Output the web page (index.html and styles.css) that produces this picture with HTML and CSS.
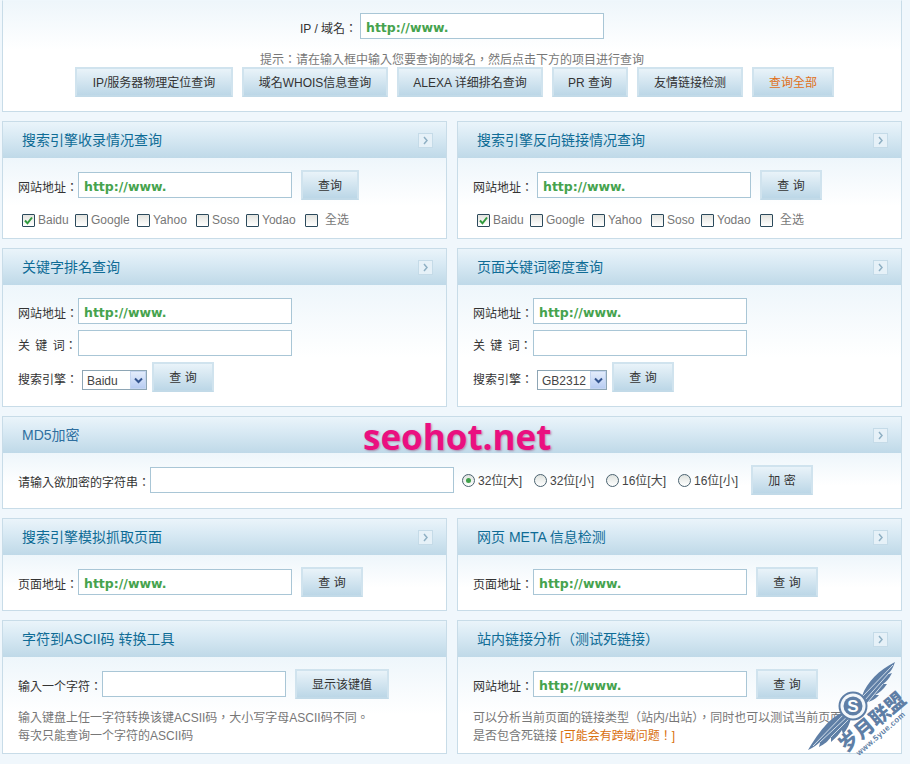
FILE: index.html
```html
<!DOCTYPE html>
<html>
<head>
<meta charset="utf-8">
<title>站长工具</title>
<link rel="stylesheet" href="styles.css">
</head>
<body>
<div class="page">
  <section class="panel top">
    <div class="top-line"><label class="lbl w60">IP / 域名：</label><input class="field url wide" value="http://www."></div>
    <p class="hint">提示：请在输入框中输入您要查询的域名，然后点击下方的项目进行查询</p>
    <div class="top-btns">
      <button class="btn b158">IP/服务器物理定位查询</button>
      <button class="btn b146">域名WHOIS信息查询</button>
      <button class="btn b146">ALEXA 详细排名查询</button>
      <button class="btn b76">PR 查询</button>
      <button class="btn b106">友情链接检测</button>
      <button class="btn b82 orange">查询全部</button>
    </div>
  </section>

  <div class="row">
    <section class="panel">
      <header class="head"><h2>搜索引擎收录情况查询</h2><span class="more"><svg width="7" height="9" viewBox="0 0 7 9"><path d="M2 1l3 3.5L2 8" fill="none" stroke="#8fb0c4" stroke-width="1.5"/></svg></span></header>
      <div class="body pad-check">
        <div class="line"><label class="lbl w60">网站地址：</label><input class="field url f214" value="http://www."><button class="btn b58">查询</button></div>
        <div class="checks">
          <span class="opt o53"><i class="box"><svg width="11" height="11" viewBox="0 0 11 11"><path d="M2 5.5l2.5 2.8L9 2.5" fill="none" stroke="#2f9a3c" stroke-width="2"/></svg></i>Baidu</span>
          <span class="opt o62"><i class="box"></i>Google</span>
          <span class="opt o59"><i class="box"></i>Yahoo</span>
          <span class="opt o50"><i class="box"></i>Soso</span>
          <span class="opt o59"><i class="box"></i>Yodao</span>
          <span class="opt all"><i class="box"></i>全选</span>
        </div>
      </div>
    </section>
    <section class="panel">
      <header class="head"><h2>搜索引擎反向链接情况查询</h2><span class="more"><svg width="7" height="9" viewBox="0 0 7 9"><path d="M2 1l3 3.5L2 8" fill="none" stroke="#8fb0c4" stroke-width="1.5"/></svg></span></header>
      <div class="body pad-check">
        <div class="line"><label class="lbl w64">网站地址：</label><input class="field url f214" value="http://www."><button class="btn b62">查 询</button></div>
        <div class="checks">
          <span class="opt o53"><i class="box"><svg width="11" height="11" viewBox="0 0 11 11"><path d="M2 5.5l2.5 2.8L9 2.5" fill="none" stroke="#2f9a3c" stroke-width="2"/></svg></i>Baidu</span>
          <span class="opt o62"><i class="box"></i>Google</span>
          <span class="opt o59"><i class="box"></i>Yahoo</span>
          <span class="opt o50"><i class="box"></i>Soso</span>
          <span class="opt o59"><i class="box"></i>Yodao</span>
          <span class="opt all"><i class="box"></i>全选</span>
        </div>
      </div>
    </section>
  </div>

  <div class="row">
    <section class="panel">
      <header class="head"><h2>关键字排名查询</h2><span class="more"><svg width="7" height="9" viewBox="0 0 7 9"><path d="M2 1l3 3.5L2 8" fill="none" stroke="#8fb0c4" stroke-width="1.5"/></svg></span></header>
      <div class="body pad-form">
        <div class="line tight"><label class="lbl w60">网站地址：</label><input class="field url f214" value="http://www."></div>
        <div class="line tight"><label class="lbl w60 spaced">关 键 词：</label><input class="field f214"></div>
        <div class="line pick"><label class="lbl w64">搜索引擎：</label><span class="select s65">Baidu<i class="arrow"><svg width="9" height="7" viewBox="0 0 9 7"><path d="M1 1.5l3.5 3.5L8 1.5" fill="none" stroke="#34558f" stroke-width="2"/></svg></i></span><button class="btn b62 near">查 询</button></div>
      </div>
    </section>
    <section class="panel">
      <header class="head"><h2>页面关键词密度查询</h2><span class="more"><svg width="7" height="9" viewBox="0 0 7 9"><path d="M2 1l3 3.5L2 8" fill="none" stroke="#8fb0c4" stroke-width="1.5"/></svg></span></header>
      <div class="body pad-form">
        <div class="line tight"><label class="lbl w60">网站地址：</label><input class="field url f214" value="http://www."></div>
        <div class="line tight"><label class="lbl w60 spaced">关 键 词：</label><input class="field f214"></div>
        <div class="line pick"><label class="lbl w64">搜索引擎：</label><span class="select s70">GB2312<i class="arrow"><svg width="9" height="7" viewBox="0 0 9 7"><path d="M1 1.5l3.5 3.5L8 1.5" fill="none" stroke="#34558f" stroke-width="2"/></svg></i></span><button class="btn b62 near">查 询</button></div>
      </div>
    </section>
  </div>

  <section class="panel solo">
    <header class="head"><h2 class="md5">MD5加密</h2><span class="more"><svg width="7" height="9" viewBox="0 0 7 9"><path d="M2 1l3 3.5L2 8" fill="none" stroke="#8fb0c4" stroke-width="1.5"/></svg></span></header>
    <div class="body pad-one">
      <div class="line">
        <label class="lbl w132">请输入欲加密的字符串：</label><input class="field f304">
        <span class="radio r72 first"><i class="dot on"></i>32位[大]</span>
        <span class="radio r72"><i class="dot"></i>32位[小]</span>
        <span class="radio r72"><i class="dot"></i>16位[大]</span>
        <span class="radio r64"><i class="dot"></i>16位[小]</span>
        <button class="btn b62">加 密</button>
      </div>
    </div>
  </section>

  <div class="row">
    <section class="panel">
      <header class="head"><h2>搜索引擎模拟抓取页面</h2><span class="more"><svg width="7" height="9" viewBox="0 0 7 9"><path d="M2 1l3 3.5L2 8" fill="none" stroke="#8fb0c4" stroke-width="1.5"/></svg></span></header>
      <div class="body pad-one">
        <div class="line"><label class="lbl w60">页面地址：</label><input class="field url f214" value="http://www."><button class="btn b62">查 询</button></div>
      </div>
    </section>
    <section class="panel">
      <header class="head"><h2>网页 META 信息检测</h2><span class="more"><svg width="7" height="9" viewBox="0 0 7 9"><path d="M2 1l3 3.5L2 8" fill="none" stroke="#8fb0c4" stroke-width="1.5"/></svg></span></header>
      <div class="body pad-one">
        <div class="line"><label class="lbl w60">页面地址：</label><input class="field url f214" value="http://www."><button class="btn b62">查 询</button></div>
      </div>
    </section>
  </div>

  <div class="row">
    <section class="panel">
      <header class="head"><h2>字符到ASCII码 转换工具</h2></header>
      <div class="body pad-note">
        <div class="line"><label class="lbl w84">输入一个字符：</label><input class="field f184"><button class="btn b94">显示该键值</button></div>
        <p class="note">输入键盘上任一字符转换该键ACSII码，大小写字母ASCII码不同。<br>每次只能查询一个字符的ASCII码</p>
      </div>
    </section>
    <section class="panel">
      <header class="head"><h2>站内链接分析（测试死链接）</h2><span class="more"><svg width="7" height="9" viewBox="0 0 7 9"><path d="M2 1l3 3.5L2 8" fill="none" stroke="#8fb0c4" stroke-width="1.5"/></svg></span></header>
      <div class="body pad-note">
        <div class="line"><label class="lbl w60">网站地址：</label><input class="field url f214" value="http://www."><button class="btn b62">查 询</button></div>
        <p class="note">可以分析当前页面的链接类型（站内/出站），同时也可以测试当前页面<br>是否包含死链接 <b class="warn">[可能会有跨域问题！]</b></p>
      </div>
    </section>
  </div>
</div>

<div class="brand">seohot.net</div>

<svg class="stamp" width="105" height="105" viewBox="0 0 105 105" aria-label="岁月联盟">
  <g fill="#5f7fa6">
    <path d="M57 36 C62 22 74 10 90 2 C88 8 86 11 83 14 C85 14 86 13 87 13 C84 19 81 22 78 24 C80 24 81 24 82 24 C78 30 74 33 70 35 C71 35 73 35 74 35 C70 40 64 42 60 43Z"/>
    <path d="M41 51 C30 55 20 62 3 90 C9 87 12 85 15 82 C15 84 14 86 14 87 C20 84 23 81 26 77 C26 79 26 80 26 82 C31 78 35 73 37 70 C37 72 38 73 38 74 C42 70 45 63 46 58Z"/>
    <g stroke="#eef5fa" stroke-width=".8" fill="none">
      <path d="M60 40L84 13M63 42L78 24M58 36L88 5"/>
      <path d="M44 55L15 82M45 58L26 77M41 52L8 86"/>
    </g>
  </g>
  <circle cx="48" cy="46" r="13.5" fill="#f4f8fb" stroke="#5f7fa6" stroke-width="2"/>
  <circle cx="48" cy="46" r="9.5" fill="#5f7fa6"/>
  <text class="stamp-s" x="48" y="52">S</text>
  <text class="stamp-cn" transform="translate(41 93) rotate(-40)">岁月联盟</text>
  <text class="stamp-en" transform="translate(54 96) rotate(-41)">www.5yue.com</text>
</svg>
</body>
</html>
```
FILE: styles.css
```css
* { box-sizing: border-box; }
html, body { margin: 0; padding: 0; }
body {
  position: relative;
  width: 910px;
  height: 764px;
  overflow: hidden;
  background: #f0f7fc;
  font: 12px/16px "Liberation Sans", "Noto Sans CJK TC", sans-serif;
  color: #333;
}
.page { width: 900px; margin-left: 2px; display: flex; flex-direction: column; gap: 9px; }
.row { display: grid; grid-template-columns: 445px 445px; column-gap: 10px; }
.panel { border: 1px solid #c8dce8; background: #fff; }
.top {
  height: 112px;
  border-top-color: #eff7fc;
  padding-top: 12px;
  background: linear-gradient(#eef6fb, #fff 45%);
}
.top-line { display: flex; justify-content: center; align-items: center; }
.hint { margin: 13px 0 0; height: 15px; text-align: center; color: #777; }
.top-btns { display: flex; justify-content: center; gap: 9px; padding-left: 5px; }
.head {
  height: 36px;
  padding: 0 13px 0 19px;
  display: flex;
  align-items: center;
  justify-content: space-between;
  background: linear-gradient(#eaf4fa, #d9eaf4 40%, #bfd9e8);
}
.head h2 { margin: 0; font-size: 14px; font-weight: 400; color: #0f6c96; white-space: nowrap; }
.head .md5 { color: #2f6f9f; }
.more {
  width: 15px;
  height: 15px;
  border: 1px solid #c5dbe8;
  background: #e6f1f8;
  display: flex;
  align-items: center;
  justify-content: center;
}
.body { background: linear-gradient(#eef6fb, #fff 60%); padding-left: 15px; }
.pad-check { height: 80px; padding-top: 12px; }
.pad-form { height: 121px; padding-top: 13px; }
.pad-one { height: 55px; padding-top: 12px; }
.pad-note { height: 96px; padding-top: 12px; }
.line { display: flex; align-items: center; height: 30px; }
.tight { height: 26px; margin-bottom: 6px; }
.lbl { color: #333; white-space: nowrap; flex: none; padding-top: 6px; }
.spaced { word-spacing: 2px; }
.w60 { width: 60px; }
.w64 { width: 64px; }
.w84 { width: 84px; }
.w132 { width: 132px; }
.field {
  flex: none;
  height: 26px;
  border: 1px solid #a9c6d6;
  background: #fff;
  padding: 2px 5px 0;
  font: 12px "Liberation Sans", sans-serif;
  border-radius: 0;
  outline: none;
}
.url { font: bold 12.5px "DejaVu Sans", sans-serif; color: #46a34e; }
.wide { width: 244px; }
.f214 { width: 214px; }
.f184 { width: 184px; }
.f304 { width: 304px; }
.btn {
  flex: none;
  height: 30px;
  padding: 2px 0 0;
  border: 2px solid #d0e3ee;
  border-bottom-color: #c2dae8;
  background: linear-gradient(#e9f3f9, #bcd7e7);
  font: 12px/16px "Liberation Sans", "Noto Sans CJK TC", sans-serif;
  color: #333;
  margin-left: 9px;
}
.top-btns .btn { margin-left: 0; }
.near { margin-left: 5px; }
.orange { color: #e0701a; }
.b158 { width: 158px; }
.b146 { width: 146px; }
.b76 { width: 76px; }
.b106 { width: 106px; }
.b82 { width: 82px; }
.b58 { width: 58px; }
.b62 { width: 62px; }
.b94 { width: 94px; }
.checks { display: flex; align-items: center; height: 16px; margin-top: 12px; padding-left: 4px; color: #777; }
.opt { display: flex; align-items: center; flex: none; }
.o53 { width: 53px; }
.o62 { width: 62px; }
.o59 { width: 59px; }
.o50 { width: 50px; }
.all .box { margin-right: 7px; }
.box {
  width: 13px;
  height: 13px;
  margin-right: 3px;
  border: 1px solid #2c4a5c;
  background: linear-gradient(#e4e4df, #fff);
  display: flex;
  align-items: center;
  justify-content: center;
  flex: none;
  border-radius: 1px;
}
.select {
  flex: none;
  position: relative;
  height: 20px;
  margin-top: 6px;
  padding: 1px 0 0 4px;
  border: 1px solid #8ea6b5;
  background: #fff;
  line-height: 18px;
  color: #444;
}
.s65 { width: 65px; }
.s70 { width: 70px; }
.arrow {
  position: absolute;
  right: 0;
  top: 0;
  bottom: 0;
  width: 16px;
  background: linear-gradient(#e3ecfb, #b8cdf2);
  border: 1px solid #c4d5f0;
  display: flex;
  align-items: center;
  justify-content: center;
}
.radio { display: flex; align-items: center; flex: none; color: #444; padding-top: 1px; }
.first { margin-left: 8px; }
.r72 { width: 72px; }
.r64 { width: 64px; }
.dot {
  position: relative;
  width: 13px;
  height: 13px;
  margin-right: 3px;
  border: 1px solid #4a6270;
  border-radius: 50%;
  background: linear-gradient(#dfe3df, #fff);
  flex: none;
}
.on::after {
  content: "";
  position: absolute;
  left: 3px;
  top: 3px;
  width: 5px;
  height: 5px;
  border-radius: 50%;
  background: #3fa04a;
}
.note { margin: 10px 0 0; line-height: 18px; color: #777; white-space: nowrap; }
.warn { font-weight: 400; color: #d9700f; }
.brand {
  position: absolute;
  left: 363px;
  top: 414px;
  font: bold 35px/46px "Open Sans", sans-serif;
  color: #ea1080;
  text-shadow: 1px 1px 2px rgba(150, 60, 110, .5);
  white-space: nowrap;
}
.stamp { position: absolute; left: 805px; top: 660px; }
.stamp-s { font: bold 17px "Liberation Sans", sans-serif; fill: #fff; text-anchor: middle; }
.stamp-cn { font: 900 20px "Noto Sans CJK TC", sans-serif; fill: #5f7fa6; }
.stamp-en { font: bold 8px "Liberation Sans", sans-serif; fill: #5f7fa6; letter-spacing: .4px; }
```
